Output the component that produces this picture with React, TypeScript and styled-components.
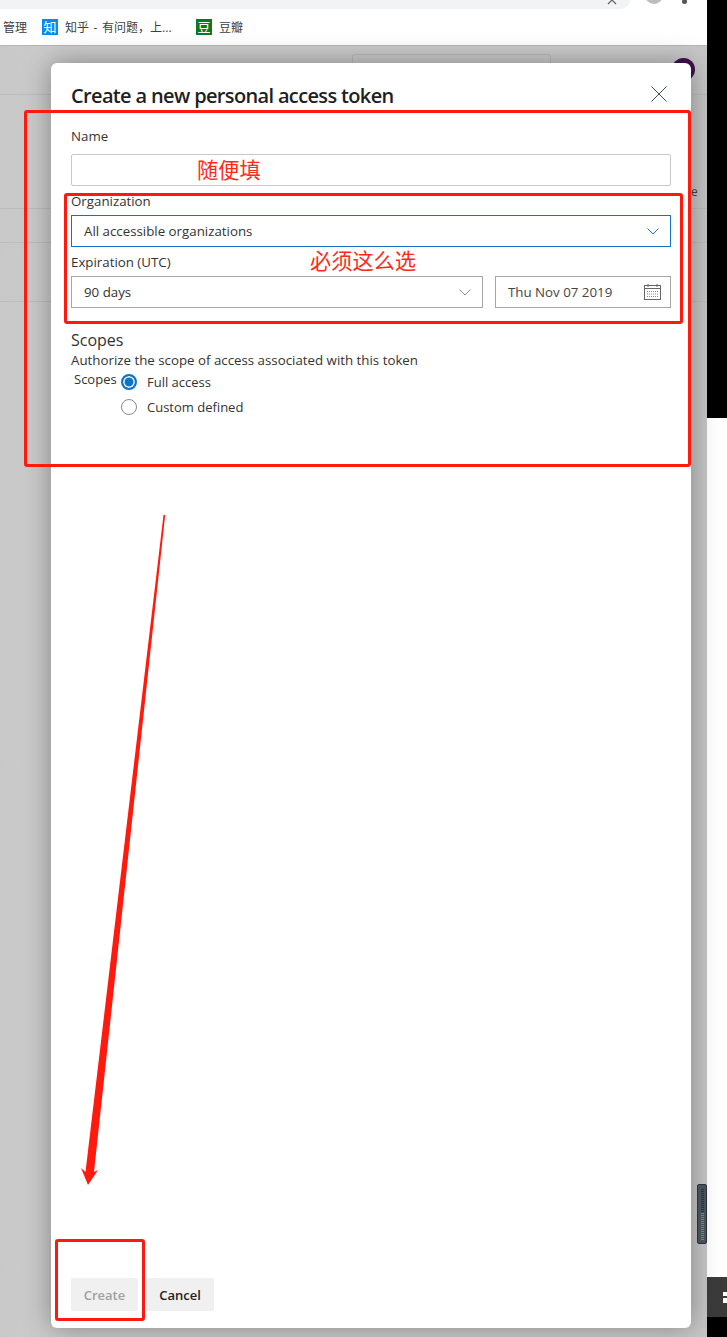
import React from 'react';
import styled, { createGlobalStyle } from 'styled-components';

const GlobalStyle = createGlobalStyle`
  html, body { margin: 0; padding: 0; background: #fff; }
  body { font-family: 'Open Sans', 'Noto Sans', 'Noto Sans CJK SC', sans-serif; overflow: hidden; }
  * { box-sizing: border-box; }
`;

const Screen = styled.div`
  position: relative;
  width: 727px;
  height: 1337px;
  display: grid;
  grid-template-columns: 707px 20px;
  overflow: hidden;
`;

const Browser = styled.div`
  display: flex;
  flex-direction: column;
  height: 1337px;
  min-width: 0;
`;

const TopStrip = styled.div`
  position: relative;
  height: 9px;
  background: #ffffff;
  flex: none;
  overflow: hidden;
`;

const AddressBar = styled.div`
  width: 630px;
  height: 9px;
  background: #f1f3f4;
  border-bottom-right-radius: 9px;
`;

const ChromeIcon = styled.span<{ $right: number; $size: number; $color: string }>`
  position: absolute;
  right: ${(p) => p.$right}px;
  top: ${(p) => 4 - p.$size}px;
  width: ${(p) => p.$size}px;
  height: ${(p) => p.$size}px;
  border-radius: 50%;
  background: ${(p) => p.$color};
`;

const StarMark = styled.svg`
  position: absolute;
  left: 607px;
  top: -5px;
  width: 10px;
  height: 10px;
`;

const Bookmarks = styled.div`
  height: 37px;
  flex: none;
  background: #fff;
  border-bottom: 1px solid #b5b5b5;
  display: flex;
  align-items: center;
  font-size: 12px;
  color: #3c4043;
  padding-bottom: 1px;
  overflow: hidden;
`;

const Bookmark = styled.div<{ $width: number; $offset?: number }>`
  display: flex;
  align-items: center;
  gap: 7px;
  width: ${(p) => p.$width}px;
  flex: none;
  white-space: nowrap;
  word-spacing: 1.5px;
  margin-left: ${(p) => p.$offset ?? 0}px;
`;

const Favicon = styled.span<{ $bg: string }>`
  width: 16px;
  height: 16px;
  flex: none;
  display: flex;
  align-items: center;
  justify-content: center;
  background: ${(p) => p.$bg};
  color: #fff;
  font-size: 13px;
  line-height: 16px;
  font-family: 'Noto Sans CJK SC', sans-serif;
`;

const Page = styled.div`
  position: relative;
  flex: 1;
  background: linear-gradient(90deg, #c8c8c8 0, #cbcbcb 40px, #cbcbcb 660px, #c6c6c6 100%);
  padding: 17px 16px 10px 51px;
  display: flex;
`;

const PageLine = styled.div<{ $top: number }>`
  position: absolute;
  left: 0;
  right: 0;
  top: ${(p) => p.$top}px;
  height: 1px;
  background: #bdbdbd;
`;

const SearchGhost = styled.div`
  position: absolute;
  left: 352px;
  top: 8px;
  width: 199px;
  height: 20px;
  border: 1px solid #bababa;
  border-radius: 2px;
`;

const Avatar = styled.div`
  position: absolute;
  left: 672px;
  top: 12px;
  width: 23px;
  height: 23px;
  border-radius: 50%;
  background: #42104f;
`;

const GhostLetter = styled.span`
  position: absolute;
  left: 691px;
  top: 137px;
  font-size: 12px;
  color: #444;
`;

const Dialog = styled.div`
  position: relative;
  z-index: 1;
  width: 640px;
  height: 1265px;
  background: #fff;
  border-radius: 6px;
  padding: 0 20px 17px;
  display: flex;
  flex-direction: column;
  box-shadow: 0 0 28px rgba(0, 0, 0, 0.36);
`;

const DialogHeader = styled.div`
  display: flex;
  justify-content: space-between;
  align-items: center;
  height: 64px;
`;

const Title = styled.h1`
  margin: 0;
  font-size: 20px;
  font-weight: 600;
  color: #1f1f1f;
  letter-spacing: -0.65px;
`;

const CloseIcon = styled.svg`
  width: 18px;
  height: 18px;
  display: block;
  margin: 0 3px 2px 0;
`;

const Form = styled.div`
  display: flex;
  flex-direction: column;
  flex: 1;
`;

const FieldLabel = styled.div<{ $height?: number; $inset?: number }>`
  height: ${(p) => p.$height ?? 20}px;
  padding-top: ${(p) => p.$inset ?? 0}px;
  font-size: 13.3px;
  line-height: 18px;
  color: #333;
`;

const Field = styled.div<{ $focused?: boolean }>`
  height: 32px;
  background: #fff;
  border: 1px solid ${(p) => (p.$focused ? '#0f74c7' : '#a6a6a6')};
  padding: 0 11px 0 12px;
  display: flex;
  align-items: center;
  justify-content: space-between;
  font-size: 13.3px;
  color: #333;
  flex: none;
`;

const NameField = styled(Field)`
  border-color: #c8c8c8;
  border-radius: 2px;
  margin-bottom: 6px;
`;

const Row = styled.div`
  display: flex;
  gap: 12px;
`;

const Select = styled(Field)`
  width: 412px;
`;

const DateField = styled(Field)`
  width: 176px;
  padding-right: 9px;
  color: #444;
`;

const ScopesHeading = styled.div`
  font-size: 16px;
  line-height: 22px;
  color: #333;
  margin-top: 21px;
`;

const ScopesHint = styled.div`
  font-size: 13.3px;
  line-height: 18px;
  color: #333;
`;

const ScopesRow = styled.div`
  display: flex;
  margin-top: 4px;
  padding-left: 3px;
`;

const ScopesLabel = styled.div`
  width: 47px;
  margin-top: -3px;
  font-size: 13px;
  line-height: 18px;
  color: #333;
`;

const RadioList = styled.div`
  display: flex;
  flex-direction: column;
  gap: 8px;
`;

const RadioRow = styled.div`
  display: flex;
  align-items: center;
  gap: 10px;
  height: 16px;
  font-size: 13px;
  color: #333;
  margin-top: 1px;
`;

const Radio = styled.span<{ $checked?: boolean }>`
  width: 16px;
  height: 16px;
  border-radius: 50%;
  flex: none;
  border: ${(p) => (p.$checked ? '2px solid #0f74c7' : '1px solid #8a8a8a')};
  background: ${(p) => (p.$checked ? '#0f74c7' : '#fff')};
  box-shadow: ${(p) => (p.$checked ? 'inset 0 0 0 1.5px #fff' : 'none')};
`;

const Footer = styled.div`
  display: flex;
  gap: 8px;
  margin-top: auto;
`;

const Button = styled.div<{ $disabled?: boolean }>`
  height: 33px;
  display: flex;
  align-items: center;
  border-radius: 2px;
  background: #f0f0f0;
  font-size: 13px;
  font-weight: 600;
  color: ${(p) => (p.$disabled ? '#a0a0a0' : '#222')};
  width: ${(p) => (p.$disabled ? 67 : 68)}px;
  justify-content: center;
`;

const SideColumn = styled.div`
  display: flex;
  flex-direction: column;
  height: 1337px;
  background: #fff;
`;

const BlackBlock = styled.div<{ $height: number }>`
  height: ${(p) => p.$height}px;
  background: #000;
  flex: none;
`;

const SideGap = styled.div`
  flex: 1;
  background: #fff;
`;

const DarkTab = styled.div`
  height: 40px;
  flex: none;
  background: #3b3b3b;
  display: flex;
  align-items: center;
`;

const TabGlyph = styled.span`
  width: 4px;
  height: 11px;
  margin-left: 16px;
  background: linear-gradient(#fff 0 4px, #3b3b3b 4px 6px, #fff 6px);
`;

const Meter = styled.div`
  position: absolute;
  left: 697px;
  top: 1184px;
  width: 10px;
  height: 60px;
  background: #48505a;
  border: 1px solid #2c3138;
  border-radius: 2px;
  display: flex;
  flex-direction: column;
  align-items: center;
  padding: 4px 0;
  gap: 1px;
  z-index: 2;
`;

const MeterTick = styled.span<{ $on: boolean }>`
  width: 3px;
  height: 1px;
  flex: none;
  background: ${(p) => (p.$on ? '#1f9fe0' : '#2b3036')};
`;

const Callout = styled.div<{ $l: number; $t: number; $w: number; $h: number }>`
  position: absolute;
  z-index: 3;
  left: ${(p) => p.$l}px;
  top: ${(p) => p.$t}px;
  width: ${(p) => p.$w}px;
  height: ${(p) => p.$h}px;
  border: 3px solid #ff1a0d;
  border-radius: 3px;
  pointer-events: none;
`;

const Note = styled.div<{ $l: number; $t: number }>`
  position: absolute;
  z-index: 3;
  left: ${(p) => p.$l}px;
  top: ${(p) => p.$t}px;
  font-family: 'Noto Sans CJK SC', sans-serif;
  font-size: 21.2px;
  line-height: 26px;
  color: #ff2a1a;
  white-space: nowrap;
`;

const ArrowCanvas = styled.svg`
  position: absolute;
  z-index: 3;
  left: 70px;
  top: 505px;
  width: 110px;
  height: 690px;
`;

const Chevron = ({ color = '#0f74c7' }: { color?: string }) => (
  <svg width="12" height="7" viewBox="0 0 12 7" fill="none">
    <path d="M0.5 0.5l5.5 5.5 5.5-5.5" stroke={color} strokeWidth="1" />
  </svg>
);

const CalendarIcon = () => (
  <svg width="17" height="16" viewBox="0 0 17 16" fill="none">
    <rect x="0.5" y="1.5" width="16" height="14" stroke="#666" />
    <path d="M1 4.5h15" stroke="#666" />
    <path d="M4 0v3M13 0v3" stroke="#666" />
    <path d="M3 7.5h11M3 10h11M3 12.5h11" stroke="#888" strokeDasharray="1 1" />
  </svg>
);

const meterTicks = Array.from({ length: 26 }, (_, i) => i >= 12);

const App = () => {
  return (
    <Screen>
      <GlobalStyle />
      <Browser>
        <TopStrip>
          <AddressBar />
          <StarMark viewBox="0 0 10 10" fill="none">
            <path d="M1 1l8 8M9 1l-8 8" stroke="#5f6368" strokeWidth="1.2" />
          </StarMark>
          <ChromeIcon $right={44} $size={18} $color="#bdbdbd" />
          <ChromeIcon $right={20} $size={5} $color="#555" />
        </TopStrip>
        <Bookmarks>
          <Bookmark $width={25} $offset={3}>
            <span>管理</span>
          </Bookmark>
          <Bookmark $width={154} $offset={14}>
            <Favicon $bg="#0f88eb">知</Favicon>
            <span>知乎 - 有问题，上...</span>
          </Bookmark>
          <Bookmark $width={100}>
            <Favicon $bg="#0a7a1f">豆</Favicon>
            <span>豆瓣</span>
          </Bookmark>
        </Bookmarks>
        <Page>
          <SearchGhost />
          <Avatar />
          <PageLine $top={48} />
          <PageLine $top={162} />
          <PageLine $top={196} />
          <PageLine $top={255} />
          <GhostLetter>e</GhostLetter>
          <Dialog>
            <DialogHeader>
              <Title>Create a new personal access token</Title>
              <CloseIcon viewBox="0 0 18 18" fill="none">
                <path d="M1.5 1.5l15 15M16.5 1.5l-15 15" stroke="#3a4a5a" strokeWidth="1" />
              </CloseIcon>
            </DialogHeader>
            <Form>
              <FieldLabel $height={27}>Name</FieldLabel>
              <NameField />
              <FieldLabel $height={23}>Organization</FieldLabel>
              <Field $focused>
                All accessible organizations
                <Chevron />
              </Field>
              <FieldLabel $height={29} $inset={6}>
                Expiration (UTC)
              </FieldLabel>
              <Row>
                <Select>
                  90 days
                  <Chevron color="#a08878" />
                </Select>
                <DateField>
                  Thu Nov 07 2019
                  <CalendarIcon />
                </DateField>
              </Row>
              <ScopesHeading>Scopes</ScopesHeading>
              <ScopesHint>Authorize the scope of access associated with this token</ScopesHint>
              <ScopesRow>
                <ScopesLabel>Scopes</ScopesLabel>
                <RadioList>
                  <RadioRow>
                    <Radio $checked />
                    Full access
                  </RadioRow>
                  <RadioRow>
                    <Radio />
                    Custom defined
                  </RadioRow>
                </RadioList>
              </ScopesRow>
              <Footer>
                <Button $disabled>Create</Button>
                <Button>Cancel</Button>
              </Footer>
            </Form>
          </Dialog>
        </Page>
      </Browser>
      <SideColumn>
        <BlackBlock $height={418} />
        <SideGap />
        <DarkTab>
          <TabGlyph />
        </DarkTab>
        <BlackBlock $height={20} />
      </SideColumn>

      <Meter>
        {meterTicks.map((on, i) => (
          <MeterTick key={i} $on={on} />
        ))}
      </Meter>

      <Callout $l={24} $t={110} $w={667} $h={357} />
      <Callout $l={64} $t={193} $w={619} $h={131} />
      <Callout $l={55} $t={1239} $w={90} $h={82} />
      <Note $l={197} $t={156}>随便填</Note>
      <Note $l={310} $t={247}>必须这么选</Note>
      <ArrowCanvas viewBox="0 0 110 690" fill="none">
        <path d="M93.5 10L95.2 10L24 667L28 665L18 680L11 663L15.5 667Z" fill="#ff1a0d" />
      </ArrowCanvas>
    </Screen>
  );
};

export default App;
